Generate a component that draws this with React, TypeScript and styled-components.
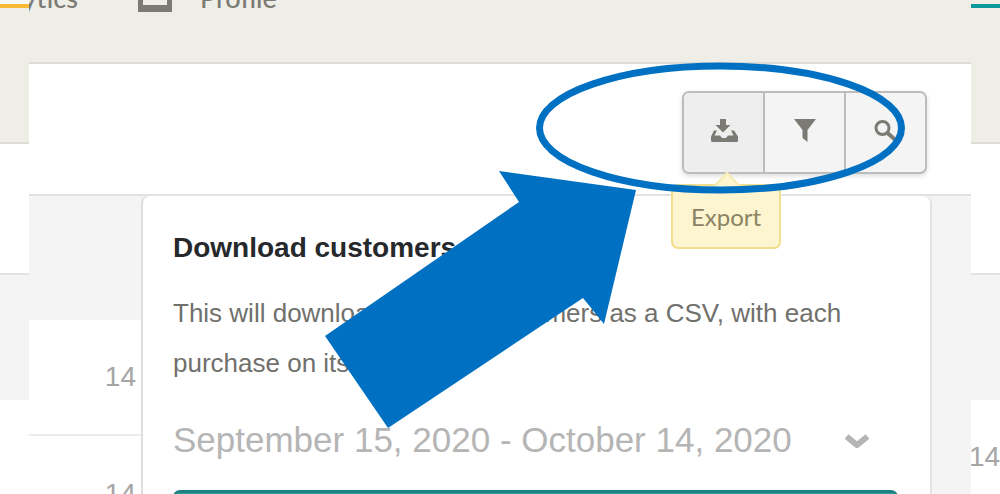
import React from "react";
import styled, { createGlobalStyle } from "styled-components";

const Global = createGlobalStyle`
  html, body { margin: 0; padding: 0; background: #fff; }
  * { box-sizing: border-box; }
`;

const Page = styled.div`
  position: relative;
  width: 1000px;
  height: 494px;
  overflow: hidden;
  background: #fff;
  font-family: "Liberation Sans", Arial, sans-serif;
`;

const TopNav = styled.nav`
  display: grid;
  grid-template-columns: 29px 1fr 29px;
  height: 62px;
  background: #eeede6;
`;

const NavEdge = styled.div<{ $bar: string; $blank?: boolean }>`
  height: 8px;
  border-bottom: 4px solid ${(p) => p.$bar};
  background: ${(p) => (p.$blank ? "#f7f7f5" : "#eeede6")};
`;

const NavItems = styled.div`
  display: flex;
  align-items: flex-start;
  overflow: hidden;
  height: 62px;
  color: #7b7a74;
`;

const NavLabel = styled.span<{ $shift: number }>`
  margin-left: ${(p) => p.$shift}px;
  margin-top: -18px;
  font-family: "Lato", sans-serif;
  font-size: 27px;
  line-height: 32px;
  font-weight: 500;
  white-space: nowrap;
`;

const NavIcon = styled.span`
  width: 34px;
  height: 12px;
  margin-left: 60px;
  border: 5px solid #7b7a74;
  border-top: none;
  border-bottom-width: 7px;
  flex: none;
`;

const Main = styled.main`
  display: grid;
  grid-template-columns: 29px 1fr 29px;
`;

const Side = styled.div`
  display: flex;
  flex-direction: column;
`;

const Band = styled.div<{ $h: number; $bg: string; $line?: string }>`
  height: ${(p) => p.$h}px;
  background: ${(p) => p.$bg};
  border-bottom: ${(p) => (p.$line ? `2px solid ${p.$line}` : "none")};
  overflow: hidden;
`;

const Center = styled.div`
  display: flex;
  flex-direction: column;
  min-width: 0;
`;

const Toolbar = styled.div`
  position: relative;
  display: flex;
  justify-content: flex-end;
  align-items: flex-start;
  height: 134px;
  padding: 27px 44px 0 0;
  background: #fff;
  border-top: 2px solid #dddcd4;
  border-bottom: 2px solid #e2e2e2;
`;

const ButtonGroup = styled.div`
  position: relative;
  display: flex;
  width: 245px;
  height: 83px;
  background: #f4f4f4;
  border: 2px solid #bcbcbc;
  border-radius: 7px;
  box-shadow: 0 2px 5px rgba(0, 0, 0, 0.14);
`;

const ToolButton = styled.button<{ $active?: boolean }>`
  flex: 1;
  display: flex;
  align-items: center;
  justify-content: center;
  padding: 0 0 5px;
  background: ${(p) => (p.$active ? "#eeeeee" : "transparent")};
  border: none;
  border-left: ${(p) => (p.$active ? "none" : "2px solid #bcbcbc")};
  border-radius: ${(p) => (p.$active ? "5px 0 0 5px" : "0")};
  flex-basis: ${(p) => (p.$active ? "79px" : "81px")};
`;

const Tooltip = styled.div`
  position: absolute;
  left: -13px;
  top: 91px;
  width: 110px;
  height: 65px;
  display: flex;
  align-items: center;
  justify-content: center;
  padding-bottom: 1px;
  background: #fdf5d0;
  border: 2px solid #f0df8e;
  border-radius: 7px;
  color: #8a8363;
  font-family: "Lato", sans-serif;
  font-size: 24px;

  &::before {
    content: "";
    position: absolute;
    left: 44px;
    top: -10px;
    width: 18px;
    height: 18px;
    background: #fdf5d0;
    border-top: 2px solid #f7ebb6;
    border-left: 2px solid #f7ebb6;
    transform: rotate(45deg);
  }
`;

const Content = styled.div`
  display: grid;
  grid-template-columns: 114px 1fr;
  flex: 1;
`;

const RowCell = styled.div<{ $h: number; $line?: boolean }>`
  height: ${(p) => p.$h}px;
  display: flex;
  align-items: center;
  justify-content: flex-end;
  padding-right: 7px;
  border-bottom: ${(p) => (p.$line ? "2px solid #ececec" : "none")};
`;

const GrayHead = styled.div`
  height: 124px;
  background: #f4f4f4;
`;

const Count = styled.span`
  font-size: 28px;
  line-height: 32px;
  color: #a5a5a5;
`;

const SideCount = styled(Count)`
  display: block;
  margin: 41px 0 0 -2px;
`;

const ModalTrack = styled.div`
  background: #f4f4f4;
  padding-right: 41px;
  height: 300px;
`;

const Modal = styled.section`
  height: 300px;
  padding: 32px 32px 0 30px;
  background: #fff;
  border-radius: 7px 7px 0 0;
  box-shadow: -2px 0 0 #dedede, 2px 0 0 #e4e4e4;
`;

const Heading = styled.h2`
  margin: 0;
  font-size: 28px;
  line-height: 40px;
  font-weight: 700;
  color: #26292c;
`;

const Body = styled.p`
  margin: 20px 0 0;
  font-size: 26px;
  line-height: 50px;
  color: #70706c;
`;

const DateRow = styled.div`
  display: flex;
  align-items: center;
  justify-content: space-between;
  height: 44px;
  margin-top: 30px;
  padding-right: 28px;
  font-size: 35px;
  color: #b5b5b5;
  white-space: nowrap;
`;

const SubmitBar = styled.div`
  height: 40px;
  margin: 28px 0 0 0;
  margin-right: 0;
  background: #2ba0a0;
  border-top: 3px solid #1f8082;
  border-radius: 7px 7px 0 0;
`;

const Annotation = styled.svg`
  position: absolute;
  inset: 0;
  pointer-events: none;
`;

const iconColor = "#7b7a74";

export default function App() {
  return (
    <Page>
      <Global />
      <TopNav>
        <NavEdge $bar="#f9b936" $blank />
        <NavItems>
          <NavLabel $shift={-60}>Analytics</NavLabel>
          <NavIcon />
          <NavLabel $shift={28}>Profile</NavLabel>
        </NavItems>
        <NavEdge $bar="#0b9a9a" />
      </TopNav>
      <Main>
        <Side>
          <Band $h={82} $bg="#eeede6" $line="#dddcd4" />
          <Band $h={131} $bg="#fff" $line="#e2e2e2" />
          <Band $h={125} $bg="#f4f4f4" />
        </Side>
        <Center>
          <Toolbar>
            <ButtonGroup>
              <ToolButton $active aria-label="Export">
                <svg width="32" height="27" viewBox="708 115 32 27">
                  <path
                    fill={iconColor}
                    d="M720 117h6v6h4.500l-7.500 7.500-7.500-7.500h4.500z"
                  />
                  <path
                    fill={iconColor}
                    d="M714 128.500h3l-2.500 5h5.500l2 2.500h4l2-2.500h5.500l-2.500-5h3l4 6v4a1.500 1.500 0 0 1-1.500 1.500h-24a1.500 1.500 0 0 1-1.500-1.500v-4z"
                  />
                </svg>
              </ToolButton>
              <ToolButton aria-label="Filter">
                <svg width="28" height="27" viewBox="790 115 28 27">
                  <path
                    fill={iconColor}
                    d="M793 117h22l-8.500 11v12l-5-4v-8z"
                  />
                </svg>
              </ToolButton>
              <ToolButton aria-label="Search">
                <svg width="26" height="26" viewBox="872 116 26 26">
                  <circle cx="881.500" cy="127" r="6.500" fill="none" stroke={iconColor} strokeWidth="3" />
                  <path d="M886.500 132l8 7" stroke={iconColor} strokeWidth="4" fill="none" />
                </svg>
              </ToolButton>
              <Tooltip>Export</Tooltip>
            </ButtonGroup>
          </Toolbar>
          <Content>
            <div>
              <GrayHead />
              <RowCell $h={116} $line>
                <Count>14</Count>
              </RowCell>
              <RowCell $h={115}>
                <Count>14</Count>
              </RowCell>
            </div>
            <ModalTrack>
              <Modal>
                <Heading>Download customers</Heading>
                <Body>
                  This will download all your customers as a CSV, with each purchase on its own row.
                </Body>
                <DateRow>
                  <span>September 15, 2020 - October 14, 2020</span>
                  <svg width="26" height="16" viewBox="0 0 26 16">
                    <path d="M2.500 4.500L13 13 23.500 4.500" fill="none" stroke="#b5b5b5" strokeWidth="6" />
                  </svg>
                </DateRow>
                <SubmitBar />
              </Modal>
            </ModalTrack>
          </Content>
        </Center>
        <Side>
          <Band $h={82} $bg="#eeede6" $line="#dddcd4" />
          <Band $h={131} $bg="#fff" $line="#e2e2e2" />
          <Band $h={125} $bg="#f4f4f4" />
          <Band $h={115} $bg="#fff">
            <SideCount>14</SideCount>
          </Band>
        </Side>
      </Main>
      <Annotation width="1000" height="494" viewBox="0 0 1000 494">
        <ellipse cx="720.500" cy="128" rx="181" ry="62" fill="none" stroke="#0071c2" strokeWidth="7" />
        <polygon
          fill="#0071c2"
          points="499,171 636,190 604,324 583,298 388,428 325,336 519,202"
        />
      </Annotation>
    </Page>
  );
}
